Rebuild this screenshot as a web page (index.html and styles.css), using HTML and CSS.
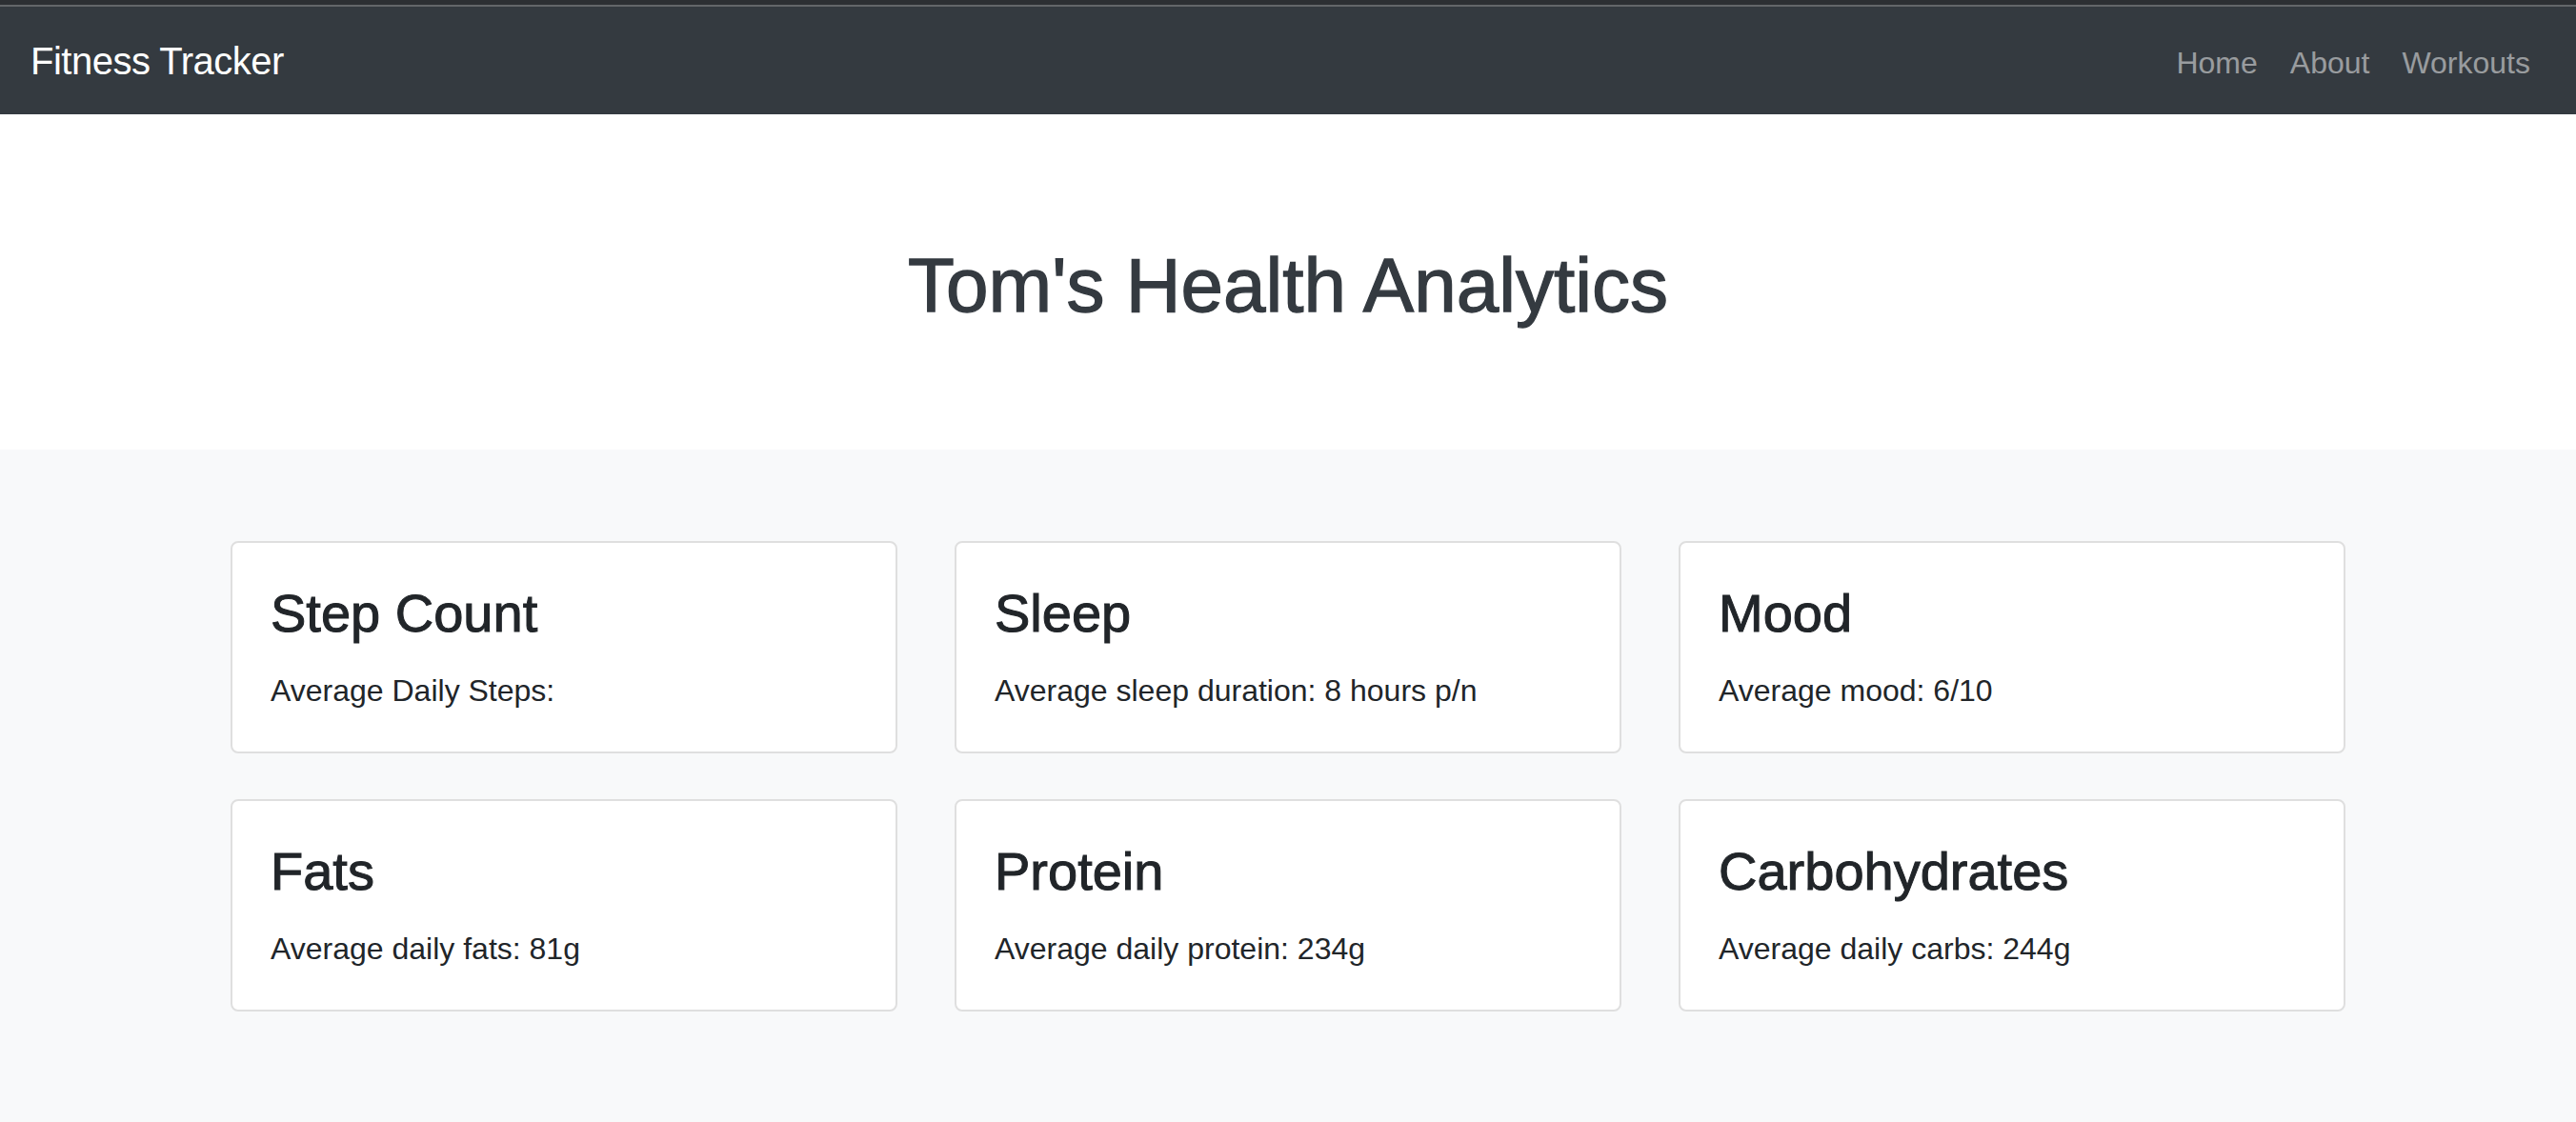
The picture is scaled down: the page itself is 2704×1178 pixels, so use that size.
FILE: index.html
```html
<!DOCTYPE html>
<html lang="en">
<head>
<meta charset="utf-8">
<title>Fitness Tracker</title>
<link rel="stylesheet" href="styles.css">
</head>
<body>
<div class="page">
  <div class="top-strip"></div>
  <nav class="navbar">
    <a class="brand" href="#">Fitness Tracker</a>
    <ul class="nav">
      <li><a class="nav-link" href="#">Home</a></li>
      <li><a class="nav-link" href="#">About</a></li>
      <li><a class="nav-link" href="#">Workouts</a></li>
    </ul>
  </nav>
  <header class="hero">
    <h1 class="hero-title">Tom's Health Analytics</h1>
  </header>
  <main class="stats">
    <div class="grid">
      <div class="card">
        <h3 class="card-title">Step Count</h3>
        <p class="card-text">Average Daily Steps:</p>
      </div>
      <div class="card">
        <h3 class="card-title">Sleep</h3>
        <p class="card-text">Average sleep duration: 8 hours p/n</p>
      </div>
      <div class="card">
        <h3 class="card-title">Mood</h3>
        <p class="card-text">Average mood: 6/10</p>
      </div>
      <div class="card">
        <h3 class="card-title">Fats</h3>
        <p class="card-text">Average daily fats: 81g</p>
      </div>
      <div class="card">
        <h3 class="card-title">Protein</h3>
        <p class="card-text">Average daily protein: 234g</p>
      </div>
      <div class="card">
        <h3 class="card-title">Carbohydrates</h3>
        <p class="card-text">Average daily carbs: 244g</p>
      </div>
    </div>
  </main>
</div>
</body>
</html>
```
FILE: styles.css
```css
* { box-sizing: border-box; }
html, body { margin: 0; padding: 0; }
body {
  font-family: "Liberation Sans", Arial, Helvetica, sans-serif;
  font-size: 32px;
  line-height: 1.5;
  color: #212529;
  background: #f8f9fa;
}
.page {
  min-height: 100vh;
  display: flex;
  flex-direction: column;
}
.top-strip {
  height: 7px;
  background: #2c2f33;
  border-bottom: 2px solid #636669;
}
.navbar {
  height: 113px;
  background: #343a40;
  display: flex;
  align-items: center;
  justify-content: space-between;
  padding: 16px 32px;
}
.brand {
  font-size: 40px;
  line-height: 60px;
  padding: 10px 0;
  color: #fff;
  text-decoration: none;
  letter-spacing: -0.5px;
}
.nav {
  list-style: none;
  margin: 0;
  padding: 0;
  display: flex;
  margin-top: 4px;
  margin-right: -1px;
}
.nav-link {
  display: block;
  padding: 8px 17px;
  color: rgba(255, 255, 255, 0.5);
  text-decoration: none;
  font-size: 32px;
  line-height: 48px;
}
.hero {
  background: #fff;
  padding: 132px 0 124px;
  text-align: center;
}
.hero-title {
  margin: 0;
  font-size: 80px;
  font-weight: 500;
  line-height: 96px;
  color: #343a40;
  -webkit-text-stroke: 1.3px #343a40;
}
.stats {
  flex: 1;
  background: #f8f9fa;
  padding: 96px 0;
}
.grid {
  display: grid;
  grid-template-columns: repeat(3, 700px);
  column-gap: 60px;
  row-gap: 48px;
  justify-content: center;
}
.card {
  background: #fff;
  border: 2px solid #dfdfdf;
  border-radius: 8px;
  padding: 40px 40px 40px;
}
.card-title {
  margin: 0 0 24px;
  font-size: 56px;
  font-weight: 500;
  line-height: 1.2;
  color: #212529;
  -webkit-text-stroke: 1px #212529;
}
.card-text {
  margin: 0;
  font-size: 32px;
  line-height: 48px;
}
```
